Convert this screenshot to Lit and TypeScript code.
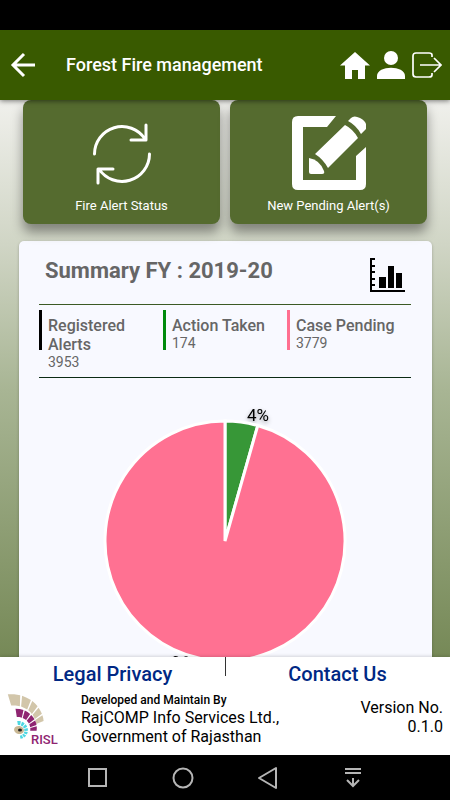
import { LitElement, html, css, svg } from "lit";
import { customElement, property } from "lit/decorators.js";
import { styleMap } from "lit/directives/style-map.js";

interface Stat {
  label: string;
  value: number;
  color: string;
}

const stats: Stat[] = [
  { label: "Registered Alerts", value: 3953, color: "#000000" },
  { label: "Action Taken", value: 174, color: "#008a0c" },
  { label: "Case Pending", value: 3779, color: "#ff6f90" },
];

interface Slice {
  value: number;
  color: string;
}

@customElement("pie-chart")
export class PieChart extends LitElement {
  @property({ attribute: false }) slices: Slice[] = [];

  static styles = css`
    :host {
      display: block;
    }
    svg {
      display: block;
      width: 100%;
      max-width: 372px;
      margin: 0 auto;
      overflow: visible;
    }
    .slice {
      stroke: #ffffff;
      stroke-width: 3;
    }
    .label {
      font: 400 17px Roboto, sans-serif;
      fill: #000000;
      text-anchor: middle;
      filter: drop-shadow(0 2px 2px rgba(0, 0, 0, 0.4));
    }
  `;

  render() {
    const cx = 186;
    const cy = 150;
    const r = 120;
    const total = this.slices.reduce((sum, s) => sum + s.value, 0);
    let start = 0;
    const parts = this.slices.map((s) => {
      const end = start + (s.value / total) * Math.PI * 2;
      const at = (a: number, d: number) => [cx + Math.sin(a) * d, cy - Math.cos(a) * d];
      const [x1, y1] = at(start, r);
      const [x2, y2] = at(end, r);
      const large = end - start > Math.PI ? 1 : 0;
      const [lx, ly] = at((start + end) / 2, r + 11);
      const towards = Math.sin((start + end) / 2) > 0 ? 15 : -20;
      start = end;
      return {
        d: `M${cx} ${cy}L${x1} ${y1}A${r} ${r} 0 ${large} 1 ${x2} ${y2}Z`,
        color: s.color,
        text: Math.round((s.value / total) * 100) + "%",
        lx: lx + towards,
        ly: ly + (ly > cy ? -3 : 10),
      };
    });
    return html`<svg viewBox="0 0 372 300" role="img" aria-label="Alerts by state">
      ${parts.map((p) => svg`<text class="label" x=${p.lx} y=${p.ly}>${p.text}</text>`)}
      ${parts.map((p) => svg`<path class="slice" d=${p.d} fill=${p.color}></path>`)}
    </svg>`;
  }
}

@customElement("app-root")
export class AppRoot extends LitElement {
  static styles = css`
    :host {
      display: flex;
      flex-direction: column;
      height: 100vh;
      overflow: hidden;
      background: #ffffff;
      font-family: Roboto, sans-serif;
      color: #000000;
    }
    button {
      font: inherit;
      color: inherit;
      border: 0;
      padding: 0;
      background: none;
      cursor: pointer;
    }
    svg {
      display: block;
    }
    .status {
      flex: none;
      height: 30px;
      background: #000000;
    }
    .toolbar {
      flex: none;
      display: flex;
      align-items: center;
      height: 70px;
      padding: 0 8px 0 10px;
      background: #395a00;
      color: #ffffff;
      box-shadow: 0 1px 5px rgba(0, 0, 0, 0.5);
      z-index: 1;
    }
    .title {
      flex: 1;
      margin: 0 0 0 30px;
      font-size: 18px;
      line-height: 24px;
      font-weight: 500;
      white-space: nowrap;
    }
    .actions {
      display: flex;
      gap: 6px;
    }
    .content {
      flex: 1;
      min-height: 0;
      overflow: hidden;
      background: linear-gradient(#f0f0ec, #d0d5c5 26%, #a8b594 52%, #768957);
    }
    .tiles {
      display: grid;
      grid-template-columns: 1fr 1fr;
      gap: 10px;
      padding: 0 23px 17px;
    }
    .tile {
      display: flex;
      flex-direction: column;
      align-items: center;
      justify-content: flex-end;
      gap: 5px;
      height: 124px;
      padding-bottom: 8px;
      border-radius: 8px;
      background: #556b2f;
      color: #ffffff;
      font-size: 13px;
      line-height: 20px;
      box-shadow: 0 8px 12px rgba(0, 0, 0, 0.4);
    }
    .picture {
      display: flex;
      align-items: center;
      height: 75px;
    }
    .summary {
      margin: 0 18px 0 19px;
      padding: 16px 21px 20px 20px;
      min-height: 420px;
      border-radius: 5px;
      background: #f8f9ff;
      box-shadow: 0 1px 3px rgba(0, 0, 0, 0.25);
      color: #666666;
    }
    .head {
      display: flex;
      justify-content: space-between;
      padding: 0 6px 11px 6px;
    }
    .head h2 {
      margin: 0;
      font-size: 22px;
      line-height: 28px;
      font-weight: 700;
    }
    .stats {
      display: grid;
      grid-template-columns: repeat(3, 1fr);
      padding: 5px 0 6px;
      border-top: 1px solid #3c5a24;
      border-bottom: 1px solid #0b2b14;
    }
    .stat {
      display: flex;
      gap: 6px;
    }
    .bar {
      flex: none;
      width: 3px;
      height: 40px;
    }
    .stat dl {
      margin: 0;
      padding-top: 6px;
    }
    .stat dt {
      font-size: 16px;
      line-height: 19px;
      font-weight: 500;
    }
    .stat dd {
      margin: 0;
      font-size: 14px;
      line-height: 17px;
    }
    pie-chart {
      margin-top: 13px;
    }
    .footer {
      flex: none;
      background: #ffffff;
      box-shadow: 0 -1px 3px rgba(0, 0, 0, 0.15);
      z-index: 1;
    }
    .links {
      display: grid;
      grid-template-columns: 1fr 1fr;
      text-align: center;
    }
    .links a {
      color: #002884;
      font-size: 20px;
      line-height: 35px;
      font-weight: 500;
      text-decoration: none;
    }
    .split {
      display: flex;
      height: 19px;
      margin-bottom: -19px;
      justify-content: center;
    }
    .split span {
      border-left: 1px solid #333333;
    }
    .about {
      display: flex;
      justify-content: space-between;
      align-items: flex-start;
      height: 63px;
      padding: 0 7px 0 6px;
    }
    .logo {
      flex: none;
      margin-right: 21px;
    }
    .logo text {
      font: 500 13px Roboto, sans-serif;
      fill: #8f2571;
    }
    .org {
      flex: 1;
      margin: 0;
      font-size: 16px;
      line-height: 19px;
    }
    .org strong {
      display: block;
      font-size: 12px;
      line-height: 16px;
      font-weight: 500;
    }
    .version {
      margin: 6px 0 0;
      font-size: 16px;
      line-height: 19px;
      text-align: right;
    }
    .nav {
      flex: none;
      display: flex;
      align-items: center;
      justify-content: center;
      gap: 61px;
      height: 45px;
      background: #000000;
    }
  `;

  // Draws one band of the fan; its radius tightens clockwise like a shell.
  private ring(inner: number, outer: number, rate: number, gap: number, color: string, cuts: number[]) {
    const p = (r: number, deg: number) => {
      const t = (deg * Math.PI) / 180;
      const d = r * (1 - deg / rate);
      return `${(13 + Math.sin(t) * d).toFixed(1)} ${(39 - Math.cos(t) * d).toFixed(1)}`;
    };
    return cuts.slice(0, -1).map((a, i) => {
      const b = cuts[i + 1] - gap;
      const m = (a + b) / 2;
      return svg`<path fill=${color} d="M${p(inner, a)}L${p(outer, a)}L${p(outer, m)}L${p(outer, b)}L${p(inner, b)}L${p(inner, m)}Z"></path>`;
    });
  }

  private logo() {
    return html`<svg class="logo" width="54" height="54" viewBox="0 0 54 54" role="img" aria-label="RISL">
      ${this.ring(25, 36, 260, 3, "#d2c6aa", [-17, 5, 24, 40, 56, 71])}
      ${this.ring(14, 22, 450, 4, "#8f2571", [-9, 16, 37, 57, 75, 93])}
      ${this.ring(6, 10, 800, 7, "#4dd8e2", [-10, 18, 44, 70, 96, 122, 148, 176])}
      <ellipse cx="13" cy="38" rx="5" ry="4" fill="#c9b894" transform="rotate(12 13 38)"></ellipse>
      <ellipse cx="14" cy="38" rx="2" ry="1.500" fill="#222222"></ellipse>
      <text x="25" y="52">RISL</text>
    </svg>`;
  }

  render() {
    return html`
      <div class="status"></div>
      <header class="toolbar">
        <button aria-label="Back">
          <svg width="26" height="28" viewBox="0 0 26 28" fill="none" stroke="#fff" stroke-width="3">
            <path d="M25 14H3M14 3L3 14L14 25"></path>
          </svg>
        </button>
        <h1 class="title">Forest Fire management</h1>
        <div class="actions">
          <button aria-label="Home">
            <svg width="30" height="30" viewBox="0 0 30 30" fill="#fff">
              <path d="M15 2L0 15.500H5V29H12V20H18V29H25V15.500H30Z"></path>
            </svg>
          </button>
          <button aria-label="Profile">
            <svg width="30" height="30" viewBox="0 0 30 30" fill="#fff">
              <circle cx="15" cy="8" r="7"></circle>
              <path d="M1 29V26C1 15 29 15 29 26V29Z"></path>
            </svg>
          </button>
          <button aria-label="Log out">
            <svg width="30" height="30" viewBox="0 0 30 30" fill="none" stroke="#fff" stroke-width="1.700">
              <path d="M20 7V5Q20 3 17 3H4Q1 3 1 6V24Q1 27 4 27H17Q20 27 20 25V23M8 15H29M22 8L29 15L22 22"></path>
            </svg>
          </button>
        </div>
      </header>
      <main class="content">
        <div class="tiles">
          <button class="tile">
            <span class="picture">
              <svg width="60" height="62" viewBox="0 0 60 62" fill="none" stroke="#fff" stroke-width="3" stroke-linecap="round" stroke-linejoin="round">
                <path d="M2.500 31A27.500 27.500 0 0 1 53 16M54 2V17H39"></path>
                <path d="M57.500 31A27.500 27.500 0 0 1 7 46M6 60V46H21"></path>
              </svg>
            </span>
            <span>Fire Alert Status</span>
          </button>
          <button class="tile">
            <span class="picture">
              <svg width="74" height="75" viewBox="0 0 74 75" fill="#fff">
                <path d="M44 0H6Q0 0 0 6V68Q0 74 6 74H68Q74 74 74 68V31L64 40V64H11V11H35Z"></path>
                <path d="M53 9Q61 13 66 22L36 52Q31 43 23 38Z"></path>
                <path d="M56 5L59 2Q62 -1 68 2Q76 6 74 13L69 18Q64 9 56 5Z"></path>
                <path d="M17 42Q28 44 32 55Q33 58 30 58H19Q17 58 17 56Z"></path>
              </svg>
            </span>
            <span>New Pending Alert(s)</span>
          </button>
        </div>
        <section class="summary">
          <div class="head">
            <h2>Summary FY : 2019-20</h2>
            <button aria-label="Show bar chart">
              <svg width="35" height="36" viewBox="0 0 35 36">
                <path d="M1 1V34H35M1 2H5M1 9H5M1 15H5M1 22H5M1 28H5" fill="none" stroke="#000" stroke-width="2"></path>
                <path d="M9 20h7v11H9zM18 9h6v22h-6zM26 16h6v15h-6z" fill="#000"></path>
              </svg>
            </button>
          </div>
          <div class="stats">
            ${stats.map(
              (s) => html`<div class="stat">
                <span class="bar" style=${styleMap({ background: s.color })}></span>
                <dl>
                  <dt>${s.label}</dt>
                  <dd>${s.value}</dd>
                </dl>
              </div>`
            )}
          </div>
          <pie-chart
            .slices=${[
              { value: 174, color: "#379737" },
              { value: 3779, color: "#ff7192" },
            ]}
          ></pie-chart>
        </section>
      </main>
      <footer class="footer">
        <div class="split"><span></span></div>
        <div class="links">
          <a href="#privacy">Legal Privacy</a>
          <a href="#contact">Contact Us</a>
        </div>
        <div class="about">
          ${this.logo()}
          <p class="org">
            <strong>Developed and Maintain By</strong>
            RajCOMP Info Services Ltd.,<br />Government of Rajasthan
          </p>
          <p class="version">Version No.<br />0.1.0</p>
        </div>
      </footer>
      <nav class="nav" aria-label="System">
        <button aria-label="Recent apps">
          <svg width="24" height="24" viewBox="0 0 24 24" fill="none" stroke="#b5b5b5" stroke-width="2"><path d="M3 3H20V20H3Z"></path></svg>
        </button>
        <button aria-label="Home screen">
          <svg width="24" height="24" viewBox="0 0 24 24" fill="none" stroke="#b5b5b5" stroke-width="2"><circle cx="12" cy="12" r="9.500"></circle></svg>
        </button>
        <button aria-label="System back">
          <svg width="24" height="24" viewBox="0 0 24 24" fill="none" stroke="#b5b5b5" stroke-width="2" stroke-linejoin="round"><path d="M20 2V22L3 12Z"></path></svg>
        </button>
        <button aria-label="Hide bar">
          <svg width="24" height="24" viewBox="0 0 24 24" fill="none" stroke="#b5b5b5" stroke-width="2"><path d="M4 3H20M4 7H20M12 12V20M6 14L12 20L18 14"></path></svg>
        </button>
      </nav>
    `;
  }
}
